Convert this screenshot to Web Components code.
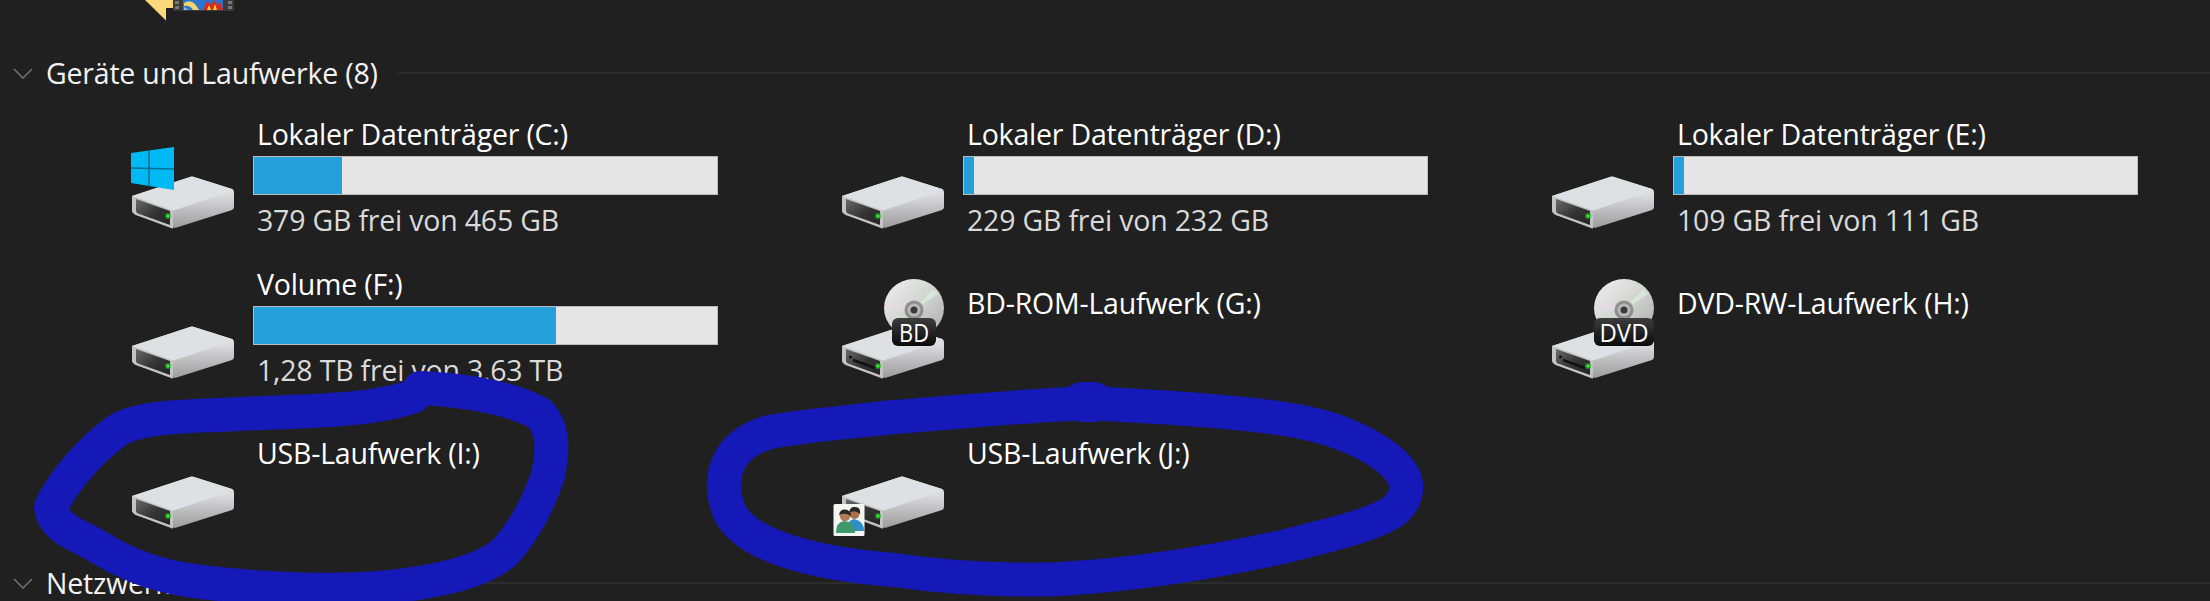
<!DOCTYPE html>
<html lang="de">
<head>
<meta charset="utf-8">
<title>Geräte und Laufwerke</title>
<style>
  html, body { margin: 0; background: #202020; }
  body { width: 2210px; height: 601px; overflow: hidden; position: relative; font-family: "Open Sans", "Liberation Sans", sans-serif; }
</style>
</head>
<body>
<explorer-page>
  <folder-peek></folder-peek>
  <section-header>Geräte und Laufwerke (8)</section-header>
  <drive-grid>
    <drive-tile label="Lokaler Datenträger (C:)" sub="379 GB frei von 465 GB" used="88" overlay="windows"></drive-tile>
    <drive-tile label="Lokaler Datenträger (D:)" sub="229 GB frei von 232 GB" used="10"></drive-tile>
    <drive-tile label="Lokaler Datenträger (E:)" sub="109 GB frei von 111 GB" used="10"></drive-tile>
    <drive-tile label="Volume (F:)" sub="1,28 TB frei von 3,63 TB" used="302"></drive-tile>
    <drive-tile label="BD-ROM-Laufwerk (G:)" overlay="BD"></drive-tile>
    <drive-tile label="DVD-RW-Laufwerk (H:)" overlay="DVD"></drive-tile>
    <drive-tile label="USB-Laufwerk (I:)"></drive-tile>
    <drive-tile label="USB-Laufwerk (J:)" overlay="users"></drive-tile>
  </drive-grid>
  <section-header class="last">Netzwerk</section-header>
</explorer-page>
<scribble-marks></scribble-marks>

<script>
// page wrapper
class ExplorerPage extends HTMLElement {
  constructor() {
    super();
    this.attachShadow({mode: 'open'}).innerHTML = `
      <style>
        :host { display: flex; flex-direction: column; width: 2210px; height: 601px; color: #fff; }
      </style>
      <slot></slot>
    `;
  }
}

// bottom of the folder thumbnail that scrolled out at the top
class FolderPeek extends HTMLElement {
  constructor() {
    super();
    this.attachShadow({mode: 'open'}).innerHTML = `
      <style>
        :host { display: block; height: 21px; padding-left: 145px; }
        svg { display: block; }
      </style>
      <svg width="90" height="21" viewBox="0 0 90 21">
        <polygon points="0,0 28,0 28,8 21,8 21,20.5" fill="#fcd87c"/>
        <rect x="28" y="0" width="61" height="11" fill="#3a3a3a"/>
        <rect x="30" y="1" width="4" height="3" fill="#777"/>
        <rect x="30" y="6" width="4" height="3" fill="#777"/>
        <rect x="83" y="1" width="4" height="3" fill="#777"/>
        <rect x="83" y="6" width="4" height="3" fill="#777"/>
        <rect x="38" y="0" width="40" height="10" fill="#2c74cf"/>
        <path d="M39 3 Q45 -1 50 4 L54 10 H48 Q45 5 39 6Z" fill="#f2d66a"/>
        <path d="M39 7 L44 10 H39Z" fill="#7ec3e8"/>
        <path d="M58 10 L62 1 L66 5 L69 0 L72 5 L75 2 L78 10Z" fill="#d92a1c"/>
        <path d="M62 10 L64 5 L66 10Z M68 10 L70 4 L72 10Z" fill="#fbd33b"/>
      </svg>
    `;
  }
}

class SectionHeader extends HTMLElement {
  constructor() {
    super();
    this.attachShadow({mode: 'open'}).innerHTML = `
      <style>
        :host { display: flex; align-items: center; height: 36px; margin-top: 34px; font-size: 28.5px; color: #f2f2f2; }
        :host(.last) { margin-top: 3px; }
        svg { margin-left: 13px; width: 20px; height: 11px; flex: none; }
        .text { margin-left: 13px; white-space: nowrap; letter-spacing: -0.2px; }
        .line { flex: 1; height: 2px; background: #2c2c2c; margin-left: 20px; }
      </style>
      <svg viewBox="0 0 20 11"><path d="M1 1 L10 10 L19 1" fill="none" stroke="#6e6e6e" stroke-width="1.6"/></svg>
      <span class="text"><slot></slot></span>
      <span class="line"></span>
    `;
  }
}

class DriveGrid extends HTMLElement {
  constructor() {
    super();
    this.attachShadow({mode: 'open'}).innerHTML = `
      <style>
        :host { display: grid; grid-template-columns: repeat(3, 710px); grid-auto-rows: 150px; margin-top: 21px; }
      </style>
      <slot></slot>
    `;
  }
}

// the extra bits that sit on top of a drive picture
const overlays = {
  windows: `
    <polygon points="0,27 43,21 43,64 0,57" fill="#00b9f5"/>
    <path d="M18 24.500 V60.500 M0 42 L43 43" stroke="#0a6f93" stroke-width="1.6"/>`,
  users: `
    <rect x="-7.500" y="78" width="31" height="32" rx="1.500" fill="#f4f6f2"/>
    <path d="M6 105 Q6 95 14 93 Q24 95 24 105 Z" fill="#2f8fc6" transform="translate(-1 0)"/>
    <circle cx="13.500" cy="88" r="5" fill="#a8714c"/>
    <path d="M8 87 Q9 80 14 81 Q20 81 19 88 Q14 83 8 87Z" fill="#2a2622"/>
    <path d="M-5 107 Q-5 96 3 95 Q14 96 14 107 Z" fill="#3e9a6c"/>
    <circle cx="4" cy="90" r="5.200" fill="#b27c56"/>
    <path d="M-2 89 Q-1 83 4 83.500 Q10 84 10 90 Q4 86 -2 89Z" fill="#2a2622"/>`
};

// disc goes behind the drive, its badge in front of it
function discBack() {
  return `
    <ellipse cx="73" cy="32" rx="30" ry="29" fill="url(#disc)"/>
    <path d="M73 34 L92 13 L97 18Z" fill="#d9efe0" opacity=".7"/>
    <path d="M73 34 L45 24 L44 30Z" fill="#ecd9ea" opacity=".7"/>
    <circle cx="73" cy="34" r="9.500" fill="#8e8e8e"/>
    <circle cx="73" cy="34" r="6.500" fill="#b9b9b9"/>
    <circle cx="73" cy="34" r="3.500" fill="#3a3a3a"/>`;
}

function discBadge(text) {
  const dvd = text == 'DVD';
  return `
    <rect x="${dvd ? 43 : 51}" y="42" width="${dvd ? 60 : 44}" height="28" rx="6" fill="url(#badge)"/>
    <text x="73" y="65.500" text-anchor="middle" font-family="Open Sans, sans-serif" font-size="25" fill="#fff" textLength="${dvd ? 49 : 30}" lengthAdjust="spacingAndGlyphs">${text}</text>`;
}

class DriveIcon extends HTMLElement {
  constructor() {
    super();
    this.attachShadow({mode: 'open'});
  }
  connectedCallback() {
    const kind = this.getAttribute('overlay') || '';
    const disc = kind == 'BD' || kind == 'DVD';
    // panel of an optical drive has a slot, a hard disk has a plain dark face
    const slot = disc ? '<path d="M12 84 L34 92" stroke="#111" stroke-width="2.500"/><circle cx="9.500" cy="81" r="1.500" fill="#111"/>' : '';
    this.shadowRoot.innerHTML = `
      <style>
        :host { display: block; width: 104px; height: 104px; }
        svg { display: block; overflow: visible; }
      </style>
      <svg width="104" height="104" viewBox="0 0 104 104">
        <defs>
          <linearGradient id="side" x1="0" y1="0" x2="0" y2="1">
            <stop offset="0" stop-color="#e2e3e6"/><stop offset=".35" stop-color="#dcdcdf"/><stop offset="1" stop-color="#9c9c9c"/>
          </linearGradient>
          <linearGradient id="panel" x1="0" y1="0" x2="1" y2="1">
            <stop offset="0" stop-color="#6a6a6a"/><stop offset=".55" stop-color="#333"/><stop offset="1" stop-color="#242424"/>
          </linearGradient>
          <linearGradient id="disc" x1="0" y1="0" x2="1" y2="1">
            <stop offset="0" stop-color="#efefef"/><stop offset=".5" stop-color="#d2d4d2"/><stop offset="1" stop-color="#a9a9a9"/>
          </linearGradient>
          <linearGradient id="badge" x1="0" y1="0" x2="0" y2="1">
            <stop offset="0" stop-color="#3d3d3d"/><stop offset="1" stop-color="#0a0a0a"/>
          </linearGradient>
        </defs>
        ${disc ? discBack() : ''}
        <path d="M1 70 L59 51 Q61 50 63 51 L101 63 Q103 64 103 66 L103 81 Q103 83 101 84 L44 102 L5 89 Q1 87 1 84Z" fill="url(#side)"/>
        <path d="M1 70 L59 51 Q61 50 63 51 L101 63 Q103 64 101 65 L44 84 Q42 85 40 84Z" fill="#dfe0e3"/>
        <path d="M1 70 L40 84 Q42 85 42 87 L42 102 Q42 103 40 102 L5 89 Q1 87 1 84Z" fill="#c4c4c4"/>
        <path d="M5 73 L39 85 L39 99 L7 87.500 Q5 86.500 5 85Z" fill="url(#panel)"/>
        ${slot}
        <circle cx="37" cy="90" r="3.200" fill="#1ea51e" opacity=".55"/>
        <circle cx="37" cy="90" r="1.800" fill="#2cf02c"/>
        ${disc ? discBadge(kind) : ''}
        ${overlays[kind] || ''}
      </svg>
    `;
  }
}

class DriveTile extends HTMLElement {
  constructor() {
    super();
    this.attachShadow({mode: 'open'});
  }
  connectedCallback() {
    const sub = this.getAttribute('sub');
    const used = this.getAttribute('used');
    const overlay = this.getAttribute('overlay');
    const bar = used ? `<div class="bar"><div class="fill" style="width:${used}px"></div></div><div class="sub">${sub}</div>` : '';
    this.shadowRoot.innerHTML = `
      <style>
        :host { display: grid; grid-template-columns: 104px 465px; column-gap: 18px; padding-left: 131px; font-size: 28.5px; }
        drive-icon { margin-top: 14px; }
        .info { display: flex; flex-direction: column; padding-top: ${used ? 4 : 23}px; }
        .label, .sub { line-height: 36px; padding-left: 4px; white-space: nowrap; letter-spacing: -0.2px; }
        .label { color: #fff; }
        .sub { color: #dadada; margin-top: 7px; }
        .bar { height: 39px; margin-top: 4px; box-sizing: border-box; border: 1px solid #bcbcbc; background: #e6e6e6; }
        .fill { height: 100%; background: #26a0da; }
      </style>
      <drive-icon ${overlay ? `overlay="${overlay}"` : ''}></drive-icon>
      <div class="info">
        <div class="label">${this.getAttribute('label')}</div>
        ${bar}
      </div>
    `;
  }
}

// the two hand drawn blue marks lie over everything else
class ScribbleMarks extends HTMLElement {
  constructor() {
    super();
    this.attachShadow({mode: 'open'}).innerHTML = `
      <style>
        :host { display: block; position: absolute; left: 0; top: 0; width: 2210px; height: 601px; pointer-events: none; }
        path { fill: none; stroke: #1519b8; stroke-width: 34; stroke-linecap: round; stroke-linejoin: round; }
      </style>
      <svg width="2210" height="601" viewBox="0 0 2210 601">
        <path d="M414 396 C370 412 300 411 240 414 C180 416 140 417 118 430 C90 450 64 480 51 507 C54 530 80 535 100 548 C130 566 160 578 210 583 C270 590 340 592 390 587 C430 582 480 574 505 552 C525 530 540 500 548 475 C553 450 554 430 540 414 C510 397 460 390 420 388"/>
        <path d="M1088 403 C1020 406 960 412 894 417 C850 422 800 426 770 432 C740 440 722 460 724 490 C726 510 732 525 760 540 C790 555 830 565 894 570 C950 578 1000 581 1060 579 C1130 575 1200 565 1282 547 C1330 535 1375 525 1395 510 C1410 495 1410 480 1395 465 C1375 445 1340 430 1306 423 C1260 413 1180 408 1088 403Z"/>
        <path d="M1082 402 L1094 402" style="stroke-width:40"/>
      </svg>
    `;
  }
}

customElements.define('explorer-page', ExplorerPage);
customElements.define('folder-peek', FolderPeek);
customElements.define('section-header', SectionHeader);
customElements.define('drive-grid', DriveGrid);
customElements.define('drive-icon', DriveIcon);
customElements.define('drive-tile', DriveTile);
customElements.define('scribble-marks', ScribbleMarks);
</script>
</body>
</html>
